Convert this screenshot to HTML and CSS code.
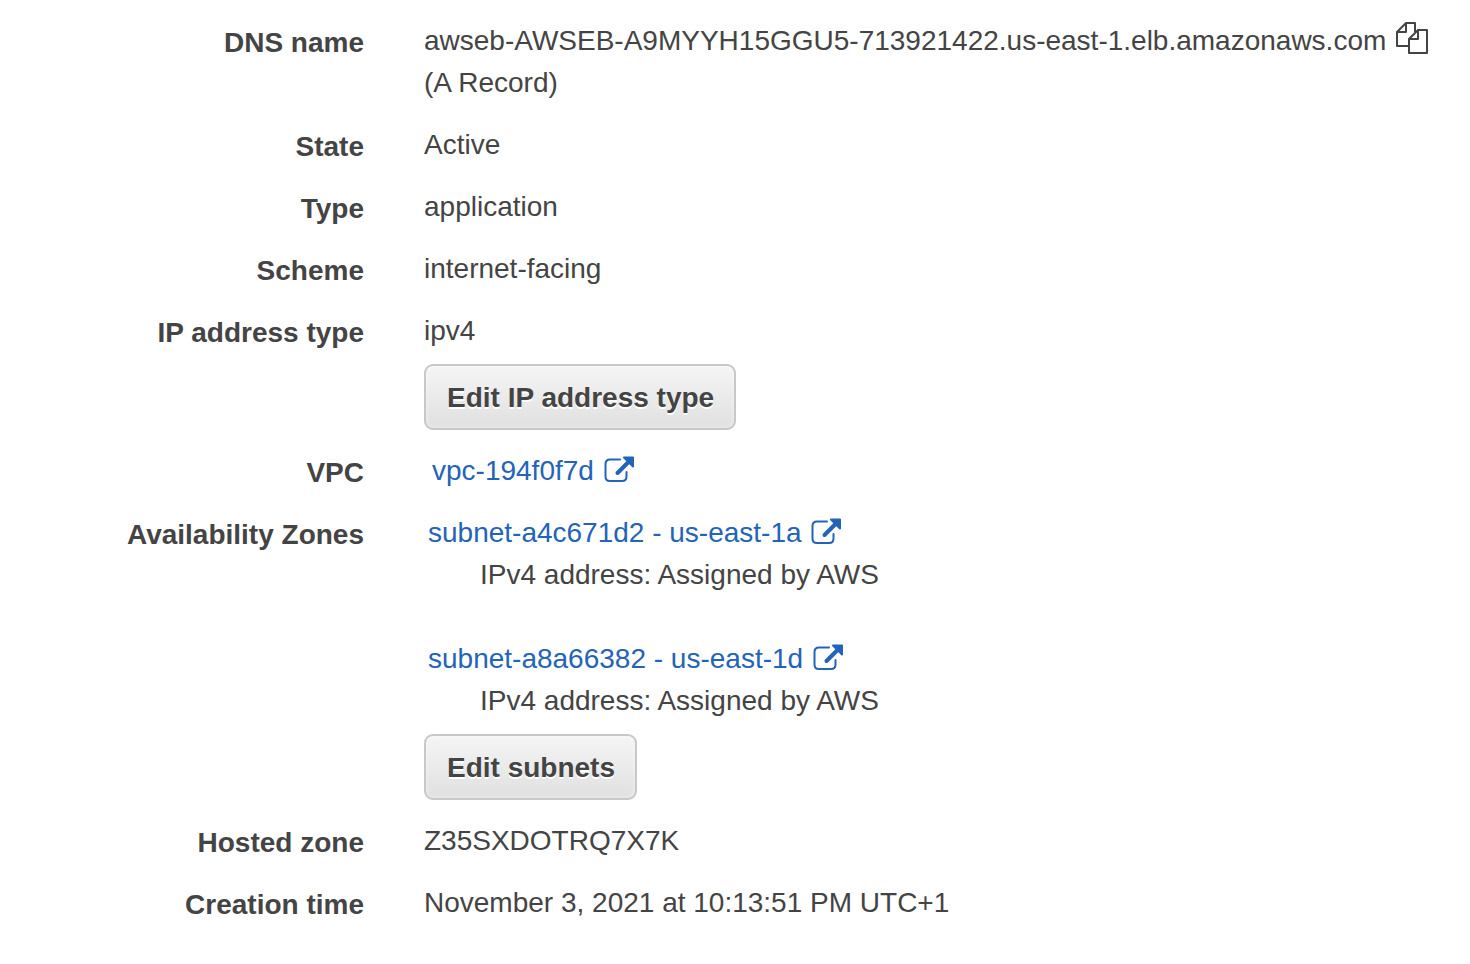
FILE: index.html
```
<!DOCTYPE html>
<html lang="en">

<head>
    <meta charset="UTF-8">
    <meta name="viewport" content="width=device-width, initial-scale=1.0">
    <title>Load balancer details</title>
    <link rel="stylesheet" href="styles.css">
</head>

<body>
    <svg class="sprite" aria-hidden="true">
        <symbol id="external" viewBox="0 0 30 27">
            <path d="M16 3.500H6Q1.500 3.500 1.500 8V20.500Q1.500 25 6 25H18Q22.500 25 22.500 20.500V16" fill="none" stroke="currentColor" stroke-width="2" stroke-linecap="round" />
            <path d="M13.500 17L25 5.500" fill="none" stroke="currentColor" stroke-width="4" stroke-linecap="round" />
            <path d="M20 1.500H29V10.500Z" fill="currentColor" stroke="currentColor" stroke-width="2" stroke-linejoin="round" />
        </symbol>
    </svg>

    <dl class="details">
        <dt>DNS name</dt>
        <dd>
            awseb-AWSEB-A9MYYH15GGU5-713921422.us-east-1.elb.amazonaws.com
            <button class="copy" type="button" aria-label="Copy DNS name">
                <svg viewBox="0 0 32 32" fill="none" stroke="currentColor" stroke-width="2" stroke-linejoin="round">
                    <path d="M12 24H1V10L10 1H19V10M10 1V10H1" />
                    <path d="M13 17L22 8H31V31H13ZM22 8V17H13" />
                </svg>
            </button>
            <br>(A Record)
        </dd>

        <dt>State</dt>
        <dd>Active</dd>

        <dt>Type</dt>
        <dd>application</dd>

        <dt>Scheme</dt>
        <dd>internet-facing</dd>

        <dt>IP address type</dt>
        <dd>
            ipv4
            <button class="edit" type="button">Edit IP address type</button>
        </dd>

        <dt>VPC</dt>
        <dd><a class="vpc" href="#">vpc-194f0f7d <svg class="external"><use href="#external" /></svg></a></dd>

        <dt>Availability Zones</dt>
        <dd>
            <div class="zone">
                <a href="#">subnet-a4c671d2 - us-east-1a <svg class="external"><use href="#external" /></svg></a>
                <p>IPv4 address: Assigned by AWS</p>
            </div>
            <div class="zone">
                <a href="#">subnet-a8a66382 - us-east-1d <svg class="external"><use href="#external" /></svg></a>
                <p>IPv4 address: Assigned by AWS</p>
            </div>
            <button class="edit" type="button">Edit subnets</button>
        </dd>

        <dt>Hosted zone</dt>
        <dd>Z35SXDOTRQ7X7K</dd>

        <dt>Creation time</dt>
        <dd>November 3, 2021 at 10:13:51 PM UTC+1</dd>
    </dl>
</body>

</html>
```
FILE: styles.css
```
body {
    margin: 0;
    background: #fff;
    color: #444;
    font: 28px/42px "Liberation Sans", Arial, sans-serif;
}

.sprite {
    display: none;
}

.details {
    display: grid;
    grid-template-columns: 364px 1fr;
    gap: 20px 60px;
    margin: 0;
    padding: 20px 24px 20px 0;
}

dt {
    padding-top: 4px;
    font-weight: bold;
    line-height: 38px;
    text-align: right;
}

dd {
    margin: 0;
}

a {
    margin-left: 4px;
    color: #2364b8;
    text-decoration: none;
}

.vpc {
    margin-left: 8px;
}

.external {
    width: 30px;
    height: 27px;
    margin-left: 2px;
    vertical-align: -3px;
}

.copy {
    height: 32px;
    margin-left: 2px;
    padding: 0;
    border: 0;
    background: none;
    color: #444;
    vertical-align: -4px;
}

.copy svg {
    display: block;
    width: 32px;
    height: 32px;
}

.edit {
    display: block;
    height: 66px;
    margin-top: 12px;
    padding: 2px 20px 0 21px;
    border: 2px solid #c8c8c8;
    border-radius: 9px;
    background: linear-gradient(#f5f5f5, #e0e0e0);
    box-shadow: inset 0 0 4px rgba(255, 255, 255, 0.6);
    color: #444;
    font: bold 28px "Liberation Sans", Arial, sans-serif;
    text-shadow: 0 2px #fff;
}

.zone p {
    margin: 0 0 0 56px;
}

.zone + .zone {
    margin-top: 42px;
}
```
